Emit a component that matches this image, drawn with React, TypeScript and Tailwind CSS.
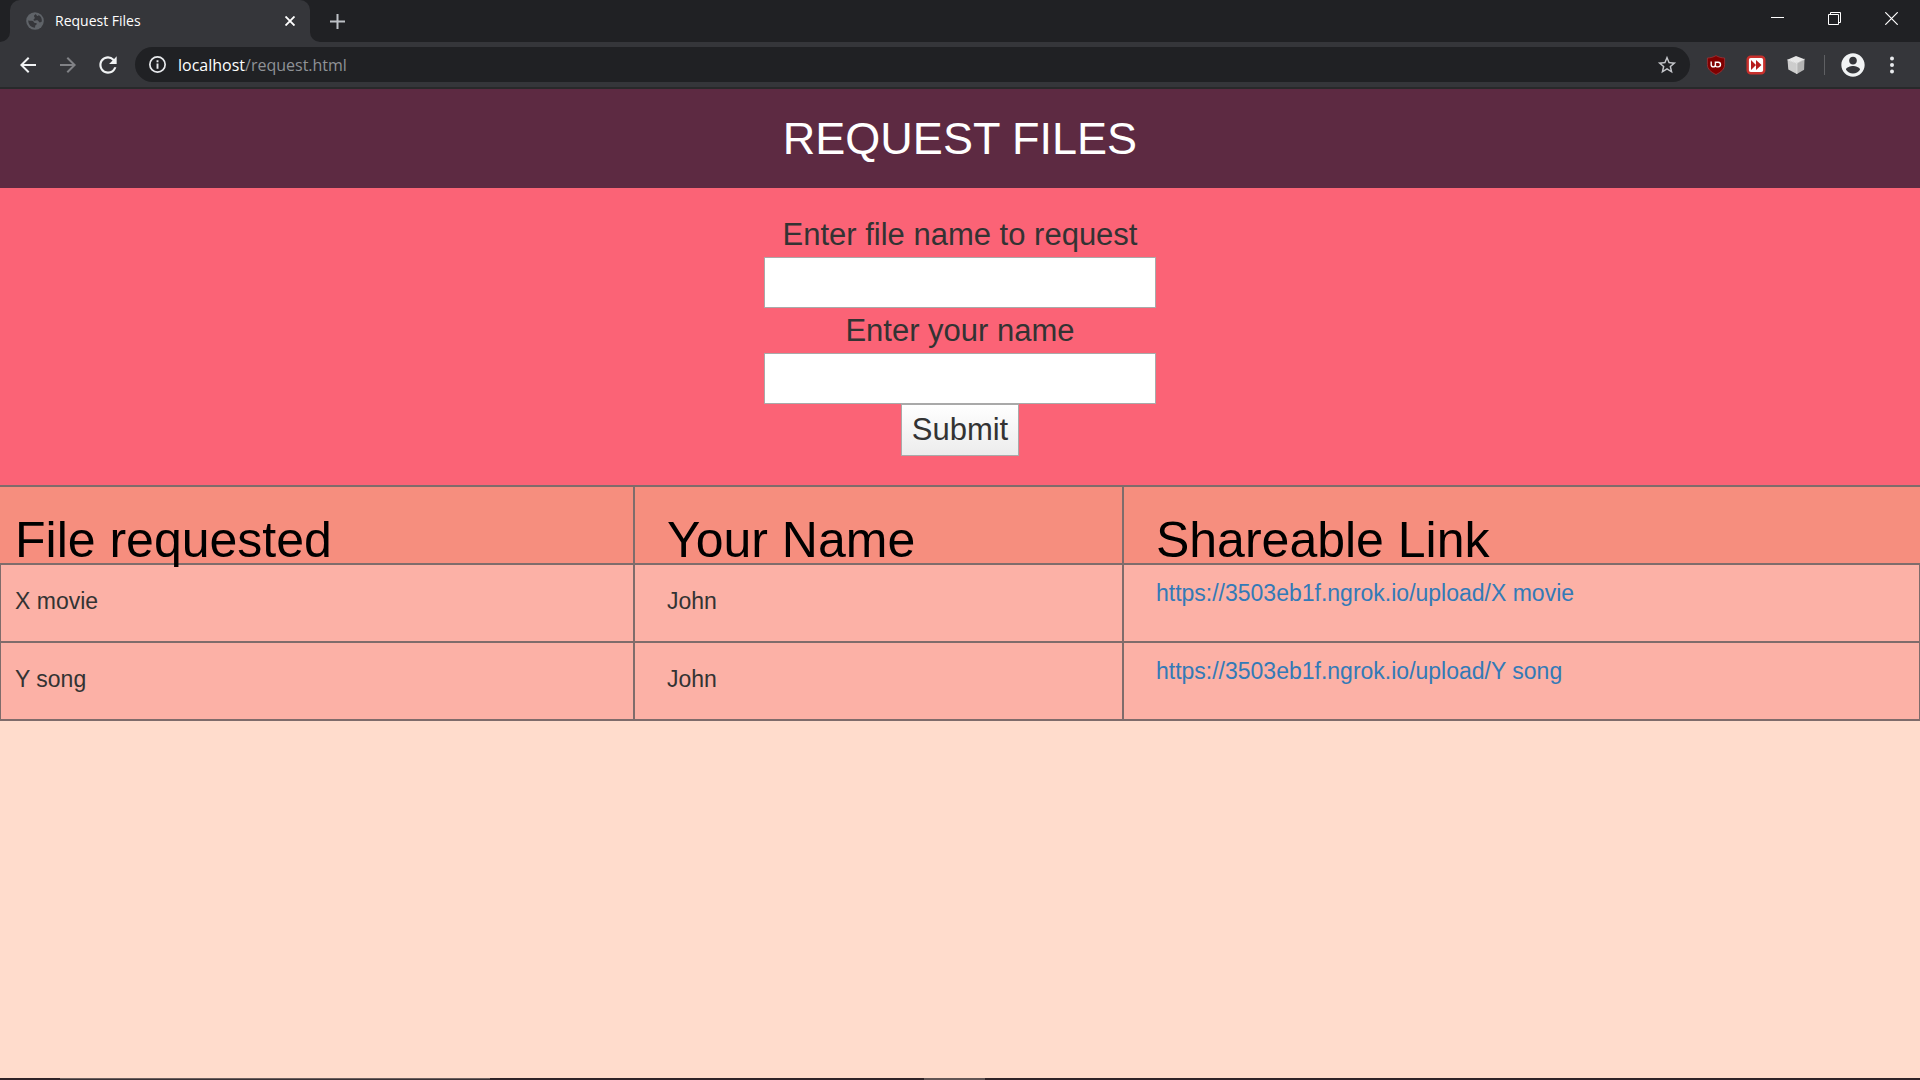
function TabStrip() {
  return (
    <div className="flex h-[42px] items-end bg-[#202124] pl-[10px]">
      <div className="relative flex h-[42px] w-[300px] items-center rounded-t-[10px] bg-[#35363a] pr-[12px] pl-4">
        <svg className="mr-[11px] size-[18px] shrink-0" viewBox="0 0 18 18" aria-hidden="true">
          <circle cx="9" cy="9" r="8.8" fill="#5f6368" />
          <path
            fill="#35363a"
            d="M2.2 8.6c1.2.3 3.3-.2 4.6.3 1.2.5 1 1.9 2.3 2.1 1 .1 1.9 0 1.7 1.1-.2.9-1.5.9-1.6 1.8-.1.6.1 1.3-.6 1.9A7 7 0 0 1 2.2 8.6zM9.5 2.1c-.1.8-1.4 1-1.5 1.9-.1.8.9 1.1.8 2-.1.9-1.3.9-1.3 1.7 0 .9 1.2 1.2 2.1.9.9-.4 1.8-.5 2.5.1.7.6.9 1.7 1.9 1.7.7 0 1.1-.6 1.8-.6A7 7 0 0 0 12.7 3.1c-.2.7-.7 1.1-1.4.8-.8-.3-.9-1.3-1.8-1.8z"
          />
        </svg>
        <span className="flex-1 text-sm text-white">Request Files</span>
        <button type="button" aria-label="Close tab" className="flex size-4 items-center justify-center">
          <svg className="size-[10px]" viewBox="0 0 10 10" stroke="#fff" strokeWidth="1.9" aria-hidden="true">
            <path d="M.5.5l9 9M9.5.5l-9 9" />
          </svg>
        </button>
        <svg className="absolute bottom-0 left-[-10px] size-[10px]" viewBox="0 0 10 10" aria-hidden="true">
          <path d="M10 0v10H0A10 10 0 0 0 10 0z" fill="#35363a" />
        </svg>
        <svg className="absolute right-[-10px] bottom-0 size-[10px]" viewBox="0 0 10 10" aria-hidden="true">
          <path d="M0 0v10h10A10 10 0 0 1 0 0z" fill="#35363a" />
        </svg>
      </div>
      <button type="button" aria-label="New tab" className="ml-[18px] flex h-[42px] w-[18px] items-center justify-center">
        <svg className="size-[15px]" viewBox="0 0 15 15" stroke="#bdc1c6" strokeWidth="2" aria-hidden="true">
          <path d="M7.5 0v15M0 7.5h15" />
        </svg>
      </button>
      <div className="ml-auto flex h-[37px] items-center self-start">
        <button type="button" aria-label="Minimize" className="flex h-full w-[57px] items-center justify-center">
          <svg className="size-[13px]" viewBox="0 0 13 13" aria-hidden="true">
            <path d="M0 5h13v1H0z" fill="#fff" />
          </svg>
        </button>
        <button type="button" aria-label="Restore" className="flex h-full w-[57px] items-center justify-center">
          <svg className="size-[13px]" viewBox="0 0 13 13" fill="none" stroke="#fff" aria-hidden="true">
            <path d="M.5 2.5h10v10H.5zM2.5 2.5V.5h10v10h-2" />
          </svg>
        </button>
        <button type="button" aria-label="Close" className="flex h-full w-[57px] items-center justify-center">
          <svg className="size-[13px]" viewBox="0 0 13 13" stroke="#fff" strokeWidth="1.2" aria-hidden="true">
            <path d="M.3.3l12.4 12.4M12.7.3L.3 12.7" />
          </svg>
        </button>
      </div>
    </div>
  );
}

function Toolbar() {
  return (
    <div className="flex h-[47px] items-center border-b-2 border-[#28292a] bg-[#35363a] px-4">
      <button type="button" aria-label="Back" className="flex size-6 items-center justify-center">
        <svg className="size-6" viewBox="0 0 24 24" fill="#f1f3f4" aria-hidden="true">
          <path d="M20 11H7.83l5.59-5.59L12 4l-8 8 8 8 1.41-1.41L7.83 13H20v-2z" />
        </svg>
      </button>
      <button type="button" aria-label="Forward" className="ml-4 flex size-6 items-center justify-center">
        <svg className="size-6" viewBox="0 0 24 24" fill="#818286" aria-hidden="true">
          <path d="M12 4l-1.41 1.41L16.17 11H4v2h12.17l-5.58 5.59L12 20l8-8z" />
        </svg>
      </button>
      <button type="button" aria-label="Reload" className="ml-4 flex size-6 items-center justify-center">
        <svg className="size-[26px] shrink-0" viewBox="0 0 24 24" fill="#f1f3f4" aria-hidden="true">
          <path d="M17.65 6.35A7.958 7.958 0 0 0 12 4c-4.42 0-7.99 3.58-7.99 8s3.57 8 7.99 8c3.73 0 6.84-2.55 7.73-6h-2.08A5.99 5.99 0 0 1 12 18c-3.31 0-6-2.69-6-6s2.69-6 6-6c1.66 0 3.14.69 4.22 1.78L13 11h7V4l-2.35 2.35z" />
        </svg>
      </button>
      <div className="ml-[15px] flex h-[35px] flex-1 items-center rounded-full bg-[#202124] pr-[13px] pl-[14px] text-base">
        <svg className="mr-3 size-[17px] shrink-0" viewBox="0 0 16 16" fill="none" stroke="#e8eaed" aria-hidden="true">
          <circle cx="8" cy="8" r="7.2" strokeWidth="1.6" />
          <path d="M8 7v5M8 4v1.8" strokeWidth="1.8" />
        </svg>
        <span className="text-white">localhost</span>
        <span className="flex-1 text-[#8f9296]">/request.html</span>
        <button type="button" aria-label="Bookmark this page" className="flex size-5 items-center justify-center">
          <svg className="size-[22px] shrink-0" viewBox="0 0 24 24" fill="#c4c6ca" aria-hidden="true">
            <path d="M22 9.24l-7.19-.62L12 2 9.19 8.63 2 9.24l5.46 4.73L5.82 21 12 17.27 18.18 21l-1.63-7.03L22 9.24zM12 15.4l-3.76 2.27 1-4.28-3.32-2.88 4.38-.38L12 6.1l1.71 4.04 4.38.38-3.32 2.88 1 4.28L12 15.4z" />
          </svg>
        </button>
      </div>
      <button type="button" aria-label="uBlock Origin" className="ml-4 flex size-5 items-center justify-center">
        <svg className="size-5" viewBox="0 0 20 20" aria-hidden="true">
          <path
            d="M10 .6c2.6 1.5 5.4 2.3 8.6 2.4v6.5c0 4.6-3.4 7.5-8.6 10-5.2-2.5-8.6-5.4-8.6-10V3C4.6 2.9 7.4 2.1 10 .6z"
            fill="#800000"
            stroke="#9c3538"
            strokeWidth=".8"
          />
          <path
            d="M5.2 6.6v3.2a2.1 2.1 0 0 0 4.2 0V6.6M10 7.3h2.2a2.3 2.3 0 0 1 0 4.6h-1.3a1.6 1.6 0 0 1-1.5-1.6"
            fill="none"
            stroke="#fff"
            strokeWidth="1.4"
          />
        </svg>
      </button>
      <button type="button" aria-label="Skip forward extension" className="ml-5 flex size-5 items-center justify-center">
        <svg className="size-5" viewBox="0 0 20 20" aria-hidden="true">
          <rect x="1.7" y="1.7" width="16.6" height="16.6" rx="3" fill="#fff" stroke="#c9302c" strokeWidth="2.4" />
          <path d="M5 5l5 5-5 5zM10 5l5.5 5-5.5 5z" fill="#b71c1c" />
        </svg>
      </button>
      <button type="button" aria-label="Cube extension" className="ml-5 flex size-5 items-center justify-center">
        <svg className="size-5" viewBox="0 0 20 20" aria-hidden="true">
          <path d="M10 1l8.5 3.2L10.8 8 1.5 4.8z" fill="#e6e6e6" />
          <path d="M1.5 4.8L10.8 8v11L2.3 14.5z" fill="#cdcdcd" />
          <path d="M18.5 4.2L10.8 8v11l7.3-4.3z" fill="#b4b4b4" />
          <path d="M1.5 4.8L10.8 8l7.7-3.8M10.8 8v11" fill="none" stroke="#f2f2f2" strokeWidth=".8" />
        </svg>
      </button>
      <span className="ml-[18px] h-5 w-px bg-[#5f6063]" />
      <button type="button" aria-label="Profile" className="ml-[14px] flex size-7 items-center justify-center">
        <svg className="size-7" viewBox="0 0 24 24" fill="#f1f3f4" aria-hidden="true">
          <path d="M12 2C6.48 2 2 6.48 2 12s4.48 10 10 10 10-4.48 10-10S17.52 2 12 2zm0 3c1.86 0 3.3 1.44 3.3 3.3S13.86 11.6 12 11.6 8.7 10.16 8.7 8.3 10.14 5 12 5zm0 14.2c-2.5 0-4.71-1.28-6-3.22.03-1.99 4-3.08 6-3.08 1.99 0 5.97 1.09 6 3.08-1.29 1.94-3.5 3.22-6 3.22z" />
        </svg>
      </button>
      <button type="button" aria-label="Menu" className="ml-[13px] flex size-6 items-center justify-center">
        <svg className="size-5" viewBox="0 0 20 20" fill="#e8eaed" aria-hidden="true">
          <circle cx="10" cy="3.5" r="2" />
          <circle cx="10" cy="10" r="2" />
          <circle cx="10" cy="16.5" r="2" />
        </svg>
      </button>
    </div>
  );
}

function RequestForm() {
  return (
    <form
      className="flex flex-col items-center bg-[#fb6376] pt-6 pb-[29px] text-[31px] leading-[45px] text-[#333]"
      onSubmit={(e) => e.preventDefault()}
    >
      <label htmlFor="file-name">Enter file name to request</label>
      <input id="file-name" type="text" className="h-[51px] w-[392px] border border-[#a9a9a9] bg-white px-2" />
      <label htmlFor="your-name">Enter your name</label>
      <input id="your-name" type="text" className="h-[51px] w-[392px] border border-[#a9a9a9] bg-white px-2" />
      <button
        type="submit"
        className="h-[52px] w-[118px] border border-[#a9a9a9] bg-linear-to-b from-white to-[#ececec] leading-[50px]"
      >
        Submit
      </button>
    </form>
  );
}

const requests = [
  { file: "X movie", name: "John" },
  { file: "Y song", name: "John" },
];

function RequestTable() {
  return (
    <table className="w-full table-fixed border-separate border-spacing-0 text-left text-[23px] text-[#333]">
      <thead>
        <tr className="bg-[#f68e7e] text-[50px] leading-[46px] text-black">
          <th className="w-[33.07%] border-y-2 border-r-2 border-[#7f6c6b] pt-[30px] pl-[15px] font-normal">File requested</th>
          <th className="w-[25.47%] border-y-2 border-r-2 border-[#7f6c6b] pt-[30px] pl-8 font-normal">Your Name</th>
          <th className="border-y-2 border-[#7f6c6b] pt-[30px] pl-8 font-normal">Shareable Link</th>
        </tr>
      </thead>
      <tbody>
        {requests.map((r) => (
          <tr key={r.file} className="bg-[#fcb1a6] leading-8">
            <td className="h-[78px] border-r-2 border-b-2 border-l border-[#7f6c6b] pb-1 pl-[14px]">{r.file}</td>
            <td className="border-r-2 border-b-2 border-[#7f6c6b] pb-1 pl-8">{r.name}</td>
            <td className="border-r border-b-2 border-[#7f6c6b] pb-5 pl-8">
              <a href={`https://3503eb1f.ngrok.io/upload/${r.file}`} className="text-[#337ab7]">
                https://3503eb1f.ngrok.io/upload/{r.file}
              </a>
            </td>
          </tr>
        ))}
      </tbody>
    </table>
  );
}

export default function App() {
  return (
    <div className="flex min-h-screen flex-col bg-[#ffdccc]">
      <div className='font-["Open_Sans","Noto_Sans",sans-serif]'>
        <TabStrip />
        <Toolbar />
      </div>
      <main className='flex-1 font-["Liberation_Sans",Arial,sans-serif]'>
        <h1 className="bg-[#5d2a42] text-center text-[45px] leading-[99px] text-white">REQUEST FILES</h1>
        <RequestForm />
        <RequestTable />
      </main>
      <div className="flex h-0.5 bg-[#2f2328]">
        <span className="ml-[60px] w-[430px] border-t border-[#6b5f5e] bg-[#3a3134]" />
        <span className="ml-[434px] w-[61px] bg-[#625555]" />
      </div>
    </div>
  );
}
